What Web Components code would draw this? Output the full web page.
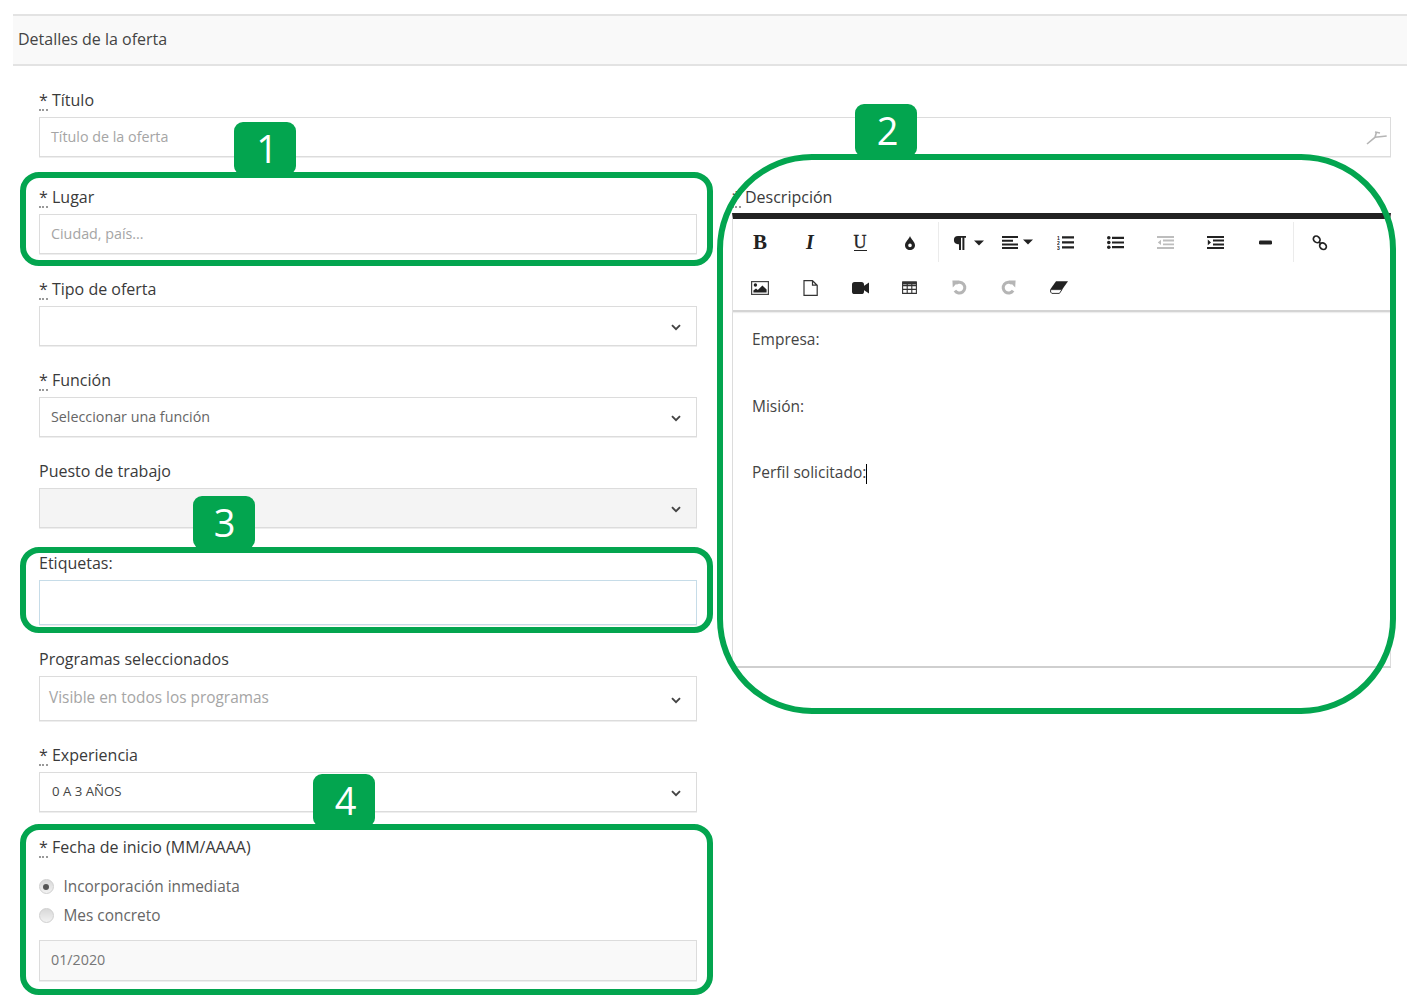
<!DOCTYPE html>
<html lang="es">
<head>
<meta charset="utf-8">
<title>Detalles de la oferta</title>
<style>
  html, body { margin: 0; padding: 0; background: #fff; }
  body { font-family: "Open Sans", "Liberation Sans", sans-serif; color: #444; position: relative; height: 1002px; overflow: hidden; }
  .page { padding: 14px 8px 0 13px; }
  .form { padding: 24px 0 0 26px; width: 1352px; }
  .columns { display: grid; grid-template-columns: 658px 659px; column-gap: 35px; margin-top: 30px; }
  .left { display: flex; flex-direction: column; gap: 24px; }
  .nudge { margin-top: 1px; }
</style>
</head>
<body>

<template id="tpl-heading">
  <style>
    :host { display: block; height: 48px; line-height: 46px; width: 1394px; padding: 0; background: #f9f9f9;
      border-top: 2px solid #e3e3e3; border-bottom: 2px solid #e3e3e3; font-size: 16px; color: #444; text-indent: 5px; }
  </style>
  <slot></slot>
</template>

<template id="tpl-field">
  <style>
    :host { display: block; }
    .label { height: 27px; line-height: 20px; font-size: 16px; color: #3a3a3a; font-weight: 500; white-space: nowrap; }
    abbr { display: inline-block; line-height: 18px; border-bottom: 2px dotted #999; text-decoration: none; }
    abbr[hidden] { display: none; }
  </style>
  <div class="label"><abbr part="req">*</abbr> <span id="t"></span></div>
  <slot></slot>
</template>

<template id="tpl-input">
  <style>
    :host { display: flex; align-items: center; box-sizing: border-box; height: 40px; padding: 0 11px 2px; border: 1px solid #dcdcdc;
      box-shadow: 0 1px 0 #eee; font-size: 14.3px; color: #a5a5a5; background: #fff; white-space: nowrap; }
    :host([value]) { color: #777; }
    :host([disabled]) { background: #f9f9f9; }
    :host([tall]) { height: 45px; border-color: #c6dce8; }
    .end { margin-left: auto; margin-right: -8px; display: flex; margin-bottom: -2px; }
  </style>
  <span><slot></slot></span><span class="end"><slot name="end"></slot></span>
</template>

<template id="tpl-select">
  <style>
    :host { display: flex; align-items: center; justify-content: space-between; box-sizing: border-box; height: 40px; padding: 0 15px 0 11px;
      border: 1px solid #dcdcdc; box-shadow: 0 1px 0 #eee; font-size: 14.3px; color: #666; background: #fff; white-space: nowrap; }
    :host([disabled]) { background: #f4f4f4; }
    :host([tall]) { height: 45px; font-size: 15.4px; color: #a5a5a5; padding-left: 9px; }
    :host([caps]) { font-size: 13.2px; color: #444; padding-left: 12px; }
    span { margin-top: -2px; }
    svg { display: block; margin-top: 3px; }
  </style>
  <span><slot></slot></span>
  <svg width="10" height="7" viewBox="0 0 10 7"><path d="M1 1.2 5 5.2 9 1.2" fill="none" stroke="#444" stroke-width="1.9"/></svg>
</template>

<template id="tpl-radio">
  <style>
    :host { display: flex; align-items: center; height: 29px; font-size: 15.4px; color: #666; white-space: nowrap; }
    i { display: block; box-sizing: border-box; width: 15px; height: 15px; border-radius: 50%; margin-right: 10px; margin-left: -.5px;
      border: 1px solid #cfcfcf; background: linear-gradient(#d8d8d8, #f2f2f2); position: relative; }
    :host([checked]) i::after { content: ""; position: absolute; left: 3.5px; top: 3.5px; width: 6px; height: 6px; border-radius: 50%; background: #555; }
  </style>
  <i></i><span><slot></slot></span>
</template>

<template id="tpl-tool">
  <style>
    :host { display: flex; align-items: center; justify-content: center; width: 50px; height: 45px; color: #222; flex: none;
      font-family: "Liberation Serif", serif; font-size: 18px; }
    :host([sep]) { width: 1px; height: 40px; background: #ebebeb; margin: 2px 3px 0; }
    :host([muted]) { color: #bbb; }
    ::slotted(svg) { display: block; }
  </style>
  <slot></slot>
</template>

<template id="tpl-editor">
  <style>
    :host { display: block; box-sizing: border-box; height: 455px; border-top: 6px solid #222; border-left: 1px solid #dcdcdc;
      border-right: 1px solid #dcdcdc; border-bottom: 2px solid #cfcfcf; background: #fff; }
    .toolbar { height: 90px; border-bottom: 2px solid #d4d4d4; padding: 1px 0 0 2px; box-shadow: 0 1px 1px #eee; }
    .row { display: flex; height: 45px; }
    .body { padding: 11px 19px 0; font-size: 15.5px; color: #444; }
  </style>
  <div class="toolbar">
    <div class="row"><slot name="row1"></slot></div>
    <div class="row"><slot name="row2"></slot></div>
  </div>
  <div class="body"><slot></slot></div>
</template>

<template id="tpl-callout">
  <style>
    :host { display: block; position: absolute; left: var(--x); top: var(--y); width: var(--w); height: var(--h); pointer-events: none; }
    .frame { position: absolute; inset: 0; box-sizing: border-box; border: 6px solid #03a54f; border-radius: var(--r, 19px); }
    .badge { position: absolute; left: var(--bx); top: var(--by, -50px); box-sizing: border-box; width: 62px; height: 53px; padding-left: var(--pl, 3px); background: #03a54f; border-radius: 9px;
      color: #fff; font-size: 38px; line-height: 53px; text-align: center; }
  </style>
  <div class="badge"><slot></slot></div>
  <div class="frame"></div>
</template>

<div class="page">
  <panel-heading>Detalles de la oferta</panel-heading>
  <div class="form">
    <form-field label="Título" required>
      <text-input>Título de la oferta
        <svg slot="end" width="22" height="17" viewBox="0 0 22 17"><path d="M2 15 10 8.3 21.7 7M10 8.3 11.5 3M10 3 15 4" fill="none" stroke="#b5b5b5" stroke-width="1.6"/></svg>
      </text-input>
    </form-field>
    <div class="columns">
      <div class="left">
        <form-field label="Lugar" required><text-input>Ciudad, país...</text-input></form-field>
        <form-field class="nudge" label="Tipo de oferta" required><select-box></select-box></form-field>
        <form-field label="Función" required><select-box>Seleccionar una función</select-box></form-field>
        <form-field label="Puesto de trabajo"><select-box disabled></select-box></form-field>
        <form-field class="nudge" label="Etiquetas:"><text-input tall></text-input></form-field>
        <form-field label="Programas seleccionados"><select-box tall>Visible en todos los programas</select-box></form-field>
        <form-field label="Experiencia" required><select-box caps>0 A 3 AÑOS</select-box></form-field>
        <form-field class="nudge" label="Fecha de inicio (MM/AAAA)" required>
          <div style="margin-top:8px">
            <radio-option checked>Incorporación inmediata</radio-option>
            <radio-option>Mes concreto</radio-option>
          </div>
          <text-input disabled value style="margin-top:10px;height:41px">01/2020</text-input>
        </form-field>
      </div>
      <form-field label="Descripción" required>
        <rich-editor style="margin-top:-1px">
          <tool-button slot="row1" style="font-weight:bold;font-size:21px">B</tool-button>
          <tool-button slot="row1" style="font-style:italic;font-weight:bold;font-size:20px">I</tool-button>
          <tool-button slot="row1" style="font-size:18px;-webkit-text-stroke:.3px #222"><span style="border-bottom:1.5px solid #222;line-height:16px;display:block">U</span></tool-button>
          <tool-button slot="row1"><svg width="10" height="14" viewBox="0 0 10 14"><path fill-rule="evenodd" d="M5 0C6 3 10 6 10 9.2 10 12 7.8 14 5 14S0 12 0 9.2C0 6 4 3 5 0ZM5 7.6A1.8 1.8 0 1 0 5 11.2 1.8 1.8 0 1 0 5 7.6Z" fill="#222"/></svg></tool-button>
          <tool-button slot="row1" sep></tool-button>
          <tool-button slot="row1"><svg style="margin-left:2px" width="31" height="14" viewBox="0 0 31 14"><path d="M5 0H13V1.8H11.4V14H9.4V1.8H8V14H6V8.2H5A4.1 4.1 0 0 1 5 0Z" fill="#222"/><path d="M21 4.5H31L26 9.5Z" fill="#222"/></svg></tool-button>
          <tool-button slot="row1"><svg width="31" height="13" viewBox="0 0 31 13"><path d="M0 0H16V2H0ZM0 3.7H11V5.7H0ZM0 7.4H16V9.4H0ZM0 11H16V13H0Z" fill="#222"/><path d="M21 3.5H31L26 8.5Z" fill="#222"/></svg></tool-button>
          <tool-button slot="row1" style="margin-left:-2px"><svg width="17" height="15" viewBox="0 0 17 15"><path d="M5 1.2H17V3.4H5ZM5 6.2H17V8.4H5ZM5 11.2H17V13.4H5Z" fill="#222"/><text x="0" y="4.5" font-size="5" font-weight="bold" font-family="Liberation Sans" fill="#222">1</text><text x="0" y="9.7" font-size="5" font-weight="bold" font-family="Liberation Sans" fill="#222">2</text><text x="0" y="15" font-size="5" font-weight="bold" font-family="Liberation Sans" fill="#222">3</text></svg></tool-button>
          <tool-button slot="row1"><svg width="17" height="13" viewBox="0 0 17 13"><circle cx="1.8" cy="1.8" r="1.8" fill="#222"/><circle cx="1.8" cy="6.5" r="1.8" fill="#222"/><circle cx="1.8" cy="11.2" r="1.8" fill="#222"/><path d="M5 .7H17V2.9H5ZM5 5.4H17V7.6H5ZM5 10.1H17V12.3H5Z" fill="#222"/></svg></tool-button>
          <tool-button slot="row1" muted><svg width="17" height="13" viewBox="0 0 17 13"><path d="M0 0H17V1.9H0ZM6 3.6H17V5.5H6ZM6 7.4H17V9.3H6ZM0 11.1H17V13H0ZM4 3.8V9L.8 6.4Z" fill="#bdbdbd"/></svg></tool-button>
          <tool-button slot="row1"><svg width="17" height="13" viewBox="0 0 17 13"><path d="M0 0H17V2H0ZM6 3.6H17V5.6H6ZM6 7.4H17V9.4H6ZM0 11H17V13H0ZM.8 3.6V9.2L4 6.4Z" fill="#222"/></svg></tool-button>
          <tool-button slot="row1"><svg width="13" height="5" viewBox="0 0 13 5"><rect width="13" height="4" y=".5" rx="1.2" fill="#222"/></svg></tool-button>
          <tool-button slot="row1" sep></tool-button>
          <tool-button slot="row1" style="margin-left:-2px"><svg width="16" height="16" viewBox="0 0 16 16"><ellipse cx="4.7" cy="4.4" rx="3.6" ry="3" transform="rotate(40 4.7 4.4)" fill="none" stroke="#222" stroke-width="1.7"/><ellipse cx="11" cy="11.2" rx="3.6" ry="3" transform="rotate(40 11 11.2)" fill="none" stroke="#222" stroke-width="1.7"/><path d="M7 7 9 9" stroke="#222" stroke-width="1.7"/></svg></tool-button>

          <tool-button slot="row2"><svg width="18" height="14" viewBox="0 0 18 14"><rect x=".6" y=".6" width="16.8" height="12.8" fill="#fff" stroke="#444" stroke-width="1.2"/><circle cx="4.4" cy="4" r="1.7" fill="#222"/><path d="M2.4 11.6V9.6L5 7.4 6.8 9 11.4 4.4 15.6 8.4V11.6Z" fill="#222"/></svg></tool-button>
          <tool-button slot="row2"><svg width="15" height="16" viewBox="0 0 15 16"><path d="M1 .7H9.5L14.2 5.2V15.3H1ZM9.5 .7V5.2H14.2" fill="none" stroke="#333" stroke-width="1.2"/></svg></tool-button>
          <tool-button slot="row2"><svg width="17" height="12" viewBox="0 0 17 12"><rect width="12" height="12" rx="2.6" fill="#222"/><path d="M11 4.6 17 .6V11.4L11 7.4Z" fill="#222"/></svg></tool-button>
          <tool-button slot="row2" style="margin-left:-1px"><svg width="15" height="13" viewBox="0 0 15 13"><path d="M.6 1H14.4V12.4H.6ZM.6 4.6H14.4M.6 8.4H14.4M5.2 1V12.4M9.8 1V12.4" fill="none" stroke="#333" stroke-width="1.1"/><rect x=".5" y=".5" width="14" height="3" fill="#333"/></svg></tool-button>
          <tool-button slot="row2" muted><svg width="15" height="15" viewBox="0 0 15 15"><path d="M3.8 3.6A5.4 5.4 0 1 1 2.9 10.6" fill="none" stroke="#b5b5b5" stroke-width="3"/><path d="M.4 .6 7.4 .6 .8 7.4Z" fill="#b5b5b5"/></svg></tool-button>
          <tool-button slot="row2" muted style="margin-left:-1px"><svg width="15" height="15" viewBox="0 0 15 15"><path d="M11.2 3.6A5.4 5.4 0 1 0 12.1 10.6" fill="none" stroke="#b5b5b5" stroke-width="3"/><path d="M14.6 .6 7.6 .6 14.2 7.4Z" fill="#b5b5b5"/></svg></tool-button>
          <tool-button slot="row2" style="margin-left:1px"><svg width="18" height="13" viewBox="0 0 18 13"><path d="M6 .2H18L12.2 8.4H.2Z" fill="#222"/><path d="M.6 8.6H12L9.4 12.4H1.8L.6 11Z" fill="#fff" stroke="#333" stroke-width="1"/></svg></tool-button>
          <p style="margin:0;height:33.25px;line-height:33.25px">Empresa:</p>
          <p style="margin:0;height:33.25px"></p>
          <p style="margin:0;height:33.25px;line-height:33.25px">Misión:</p>
          <p style="margin:0;height:33.25px"></p>
          <p style="margin:0;height:33.25px;line-height:33.25px">Perfil solicitado:<span style="display:inline-block;width:1px;height:20px;background:#000;vertical-align:middle"></span></p>
        </rich-editor>
      </form-field>
    </div>
  </div>
</div>

<call-out style="--x:717px;--y:154px;--w:679px;--h:560px;--r:95px;--bx:138px">2</call-out>
<call-out style="--x:20px;--y:172px;--w:693px;--h:94px;--bx:214px;--pl:4px">1</call-out>
<call-out style="--x:20px;--y:547px;--w:693px;--h:86px;--bx:173px;--by:-51px;--pl:1px">3</call-out>
<call-out style="--x:20px;--y:824px;--w:693px;--h:171px;--bx:293px">4</call-out>

<script>
// every element just stamps its own template into an open shadow root
function simple(tag, tplId) {
  customElements.define(tag, class extends HTMLElement {
    constructor() {
      super();
      this.attachShadow({ mode: 'open' });
      this.shadowRoot.appendChild(document.getElementById(tplId).content.cloneNode(true));
    }
  });
}

simple('panel-heading', 'tpl-heading');
simple('text-input', 'tpl-input');
simple('select-box', 'tpl-select');
simple('radio-option', 'tpl-radio');
simple('tool-button', 'tpl-tool');
simple('rich-editor', 'tpl-editor');
simple('call-out', 'tpl-callout');

class FormField extends HTMLElement {
  constructor() {
    super();
    this.attachShadow({ mode: 'open' });
    this.shadowRoot.appendChild(document.getElementById('tpl-field').content.cloneNode(true));
  }
  connectedCallback() {
    this.shadowRoot.getElementById('t').textContent = this.getAttribute('label') || '';
    this.shadowRoot.querySelector('abbr').hidden = !this.hasAttribute('required');
  }
}
customElements.define('form-field', FormField);
</script>
</body>
</html>
